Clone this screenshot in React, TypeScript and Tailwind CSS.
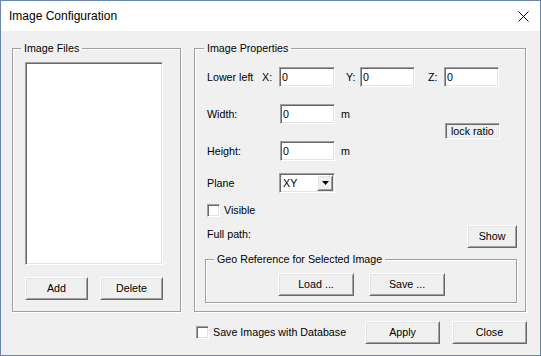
import React from "react";

const sunken =
  "border border-t-[#a0a0a0] border-l-[#a0a0a0] border-b-white border-r-white shadow-[inset_1px_1px_0_#696969,inset_-1px_-1px_0_#e3e3e3]";
const raised =
  "border border-t-white border-l-white border-b-[#696969] border-r-[#696969] shadow-[inset_1px_1px_0_#e3e3e3,inset_-1px_-1px_0_#a0a0a0] bg-[#f0f0f0] flex items-center justify-center";
const group =
  "border border-[#a0a0a0] shadow-[inset_1px_1px_0_#ffffff,1px_1px_0_#ffffff] m-0 p-0 min-w-0";

function TextBox({ w }: { w: string }) {
  return (
    <div className={`${sunken} ${w} h-[20px] bg-white flex items-center pl-[2px]`}>0</div>
  );
}

function CheckBox() {
  return <div className={`${sunken} w-[13px] h-[13px] bg-white shrink-0`} />;
}

export default function App() {
  return (
    <div className="w-[541px] h-[356px] bg-[#f0f0f0] border border-[#6a86a8] flex flex-col text-[10.7px] leading-[13px] text-black font-['Liberation_Sans',Arial,sans-serif] overflow-hidden">
      <div className="h-[30px] bg-white flex items-center justify-between pl-[8px] pr-[11px] shrink-0">
        <span className="text-[12px] leading-[16px]">Image Configuration</span>
        <svg width="11" height="11" viewBox="0 0 11 11">
          <path d="M0.5 0.5L10.5 10.5M10.5 0.5L0.5 10.5" stroke="#000" strokeWidth="1" />
        </svg>
      </div>

      <div className="flex pl-[11px] pr-[13px] mt-[11px] gap-[13px]">
        <fieldset className={`${group} w-[169px] h-[270px]`}>
          <legend className="ml-[8px] px-[3px] leading-[13px]">Image Files</legend>
          <div className="pl-[12px] pt-[7px] flex flex-col">
            <div className={`${sunken} w-[138px] h-[203px] bg-white`} />
            <div className="flex gap-[12px] mt-[12px]">
              <div className={`${raised} w-[63px] h-[23px]`}>Add</div>
              <div className={`${raised} w-[63px] h-[23px]`}>Delete</div>
            </div>
          </div>
        </fieldset>

        <fieldset className={`${group} w-[332px] h-[270px]`}>
          <legend className="ml-[9px] px-[3px] leading-[13px]">Image Properties</legend>
          <div className="pl-[10px] pr-[8px] flex flex-col">
            <div className="flex items-center pl-[2px] mt-[12px] h-[20px]">
              <span className="w-[55px]">Lower left</span>
              <span className="w-[17px]">X:</span>
              <TextBox w="w-[56px]" />
              <span className="w-[14px] ml-[11px]">Y:</span>
              <TextBox w="w-[55px]" />
              <span className="w-[16px] ml-[13px]">Z:</span>
              <TextBox w="w-[55px]" />
            </div>

            <div className="flex pl-[2px] mt-[17px]">
              <div className="flex flex-col">
                <div className="flex items-center h-[20px]">
                  <span className="w-[73px]">Width:</span>
                  <TextBox w="w-[55px]" />
                  <span className="ml-[6px]">m</span>
                </div>
                <div className="flex items-center h-[20px] mt-[17px]">
                  <span className="w-[73px]">Height:</span>
                  <TextBox w="w-[55px]" />
                  <span className="ml-[6px]">m</span>
                </div>
              </div>
              <div className="ml-auto mr-[17px] pt-[19px]">
                <div className={`${sunken} w-[55px] h-[16px] bg-[#f0f0f0] flex items-center pl-[5px]`}>lock ratio</div>
              </div>
            </div>

            <div className="flex items-center pl-[2px] mt-[12px] h-[20px]">
              <span className="w-[72px]">Plane</span>
              <div className={`${sunken} w-[56px] h-[20px] bg-white flex items-stretch p-[1px]`}>
                <span className="flex-1 flex items-center pl-[2px]">XY</span>
                <div className={`${raised} w-[16px]`}>
                  <svg width="7" height="4" viewBox="0 0 7 4">
                    <path d="M0 0H7L3.5 4Z" fill="#000" />
                  </svg>
                </div>
              </div>
            </div>

            <div className="flex items-center pl-[2px] mt-[11px] h-[13px]">
              <CheckBox />
              <span className="ml-[4px]">Visible</span>
            </div>

            <div className="flex items-start justify-between pl-[2px] mt-[8px] h-[23px]">
              <span className="pt-[3px]">Full path:</span>
              <div className={`${raised} w-[50px] h-[23px]`}>Show</div>
            </div>

            <fieldset className={`${group} w-[312px] h-[50px] mt-[5px]`}>
              <legend className="ml-[8px] px-[3px] leading-[13px]">Geo Reference for Selected Image</legend>
              <div className="flex pl-[72px] pt-[7px] gap-[15px]">
                <div className={`${raised} w-[76px] h-[23px]`}>Load ...</div>
                <div className={`${raised} w-[76px] h-[23px]`}>Save ...</div>
              </div>
            </fieldset>
          </div>
        </fieldset>
      </div>

      <div className="flex items-center pl-[195px] pr-[13px] mt-[9px]">
        <CheckBox />
        <span className="ml-[4px]">Save Images with Database</span>
        <div className="ml-auto flex gap-[12px]">
          <div className={`${raised} w-[75px] h-[23px]`}>Apply</div>
          <div className={`${raised} w-[75px] h-[23px]`}>Close</div>
        </div>
      </div>
    </div>
  );
}
